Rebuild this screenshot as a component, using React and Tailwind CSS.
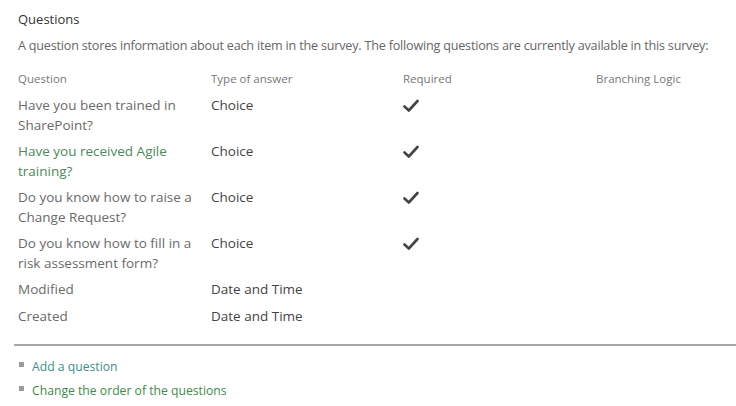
const rows = [
  { q: ['Have you been trained in', 'SharePoint?'], type: 'Choice', req: true },
  { q: ['Have you received Agile', 'training?'], type: 'Choice', req: true, link: true },
  { q: ['Do you know how to raise a', 'Change Request?'], type: 'Choice', req: true },
  { q: ['Do you know how to fill in a', 'risk assessment form?'], type: 'Choice', req: true },
  { q: ['Modified'], type: 'Date and Time' },
  { q: ['Created'], type: 'Date and Time' },
]

function Check() {
  return (
    <svg width="16" height="14" viewBox="0 0 16 14" className="mt-[4px]">
      <path d="M1.5 7.5 L5.8 11.5 L14.5 2" fill="none" stroke="#444" strokeWidth="2.6" strokeLinecap="round" strokeLinejoin="round" />
    </svg>
  )
}

export default function App() {
  return (
    <div className="w-[736px] h-[406px] bg-white overflow-hidden" style={{ fontFamily: '"Open Sans", "Noto Sans", sans-serif' }}>
      <div className="pl-[18px] pt-[10px]">
        <h2 className="text-[13px] leading-[18px] text-[#333]">Questions</h2>
        <p className="mt-[9px] text-[12.6px] leading-[18px] text-[#666] whitespace-nowrap tracking-[-0.2px]">
          A question stores information about each item in the survey. The following questions are currently available in this survey:
        </p>

        <div className="mt-[16px] grid grid-cols-[193px_192px_193px_1fr] text-[11.5px] leading-[16px] text-[#777]">
          <div>Question</div>
          <div>Type of answer</div>
          <div>Required</div>
          <div>Branching Logic</div>
        </div>

        <div className="mt-[8px]">
          {rows.map((r, i) => (
            <div key={i} className={`grid grid-cols-[193px_192px_193px_1fr] text-[13.5px] leading-[20px] ${r.q.length > 1 ? 'h-[46px]' : 'h-[27px]'}`}>
              <div className={r.link ? 'text-[#4b8a58]' : 'text-[#6a6a6a]'}>
                {r.q.map((l, j) => (
                  <div key={j} className="whitespace-nowrap">{l}</div>
                ))}
              </div>
              <div className="text-[#444]">{r.type}</div>
              <div>{r.req && <Check />}</div>
              <div></div>
            </div>
          ))}
        </div>
      </div>

      <div className="mt-[11px] ml-[14px] border-t-2 border-[#a6a6a6]"></div>

      <ul className="pl-[19px] pt-[9px] text-[12.2px] leading-[24px]">
        <li className="flex items-center gap-[8px]">
          <span className="w-[5px] h-[5px] bg-[#9a9a9a] -mt-[5px]"></span>
          <span className="text-[#3a8f88]">Add a question</span>
        </li>
        <li className="flex items-center gap-[8px]">
          <span className="w-[5px] h-[5px] bg-[#9a9a9a] -mt-[5px]"></span>
          <span className="text-[#3f8a48]">Change the order of the questions</span>
        </li>
      </ul>
    </div>
  )
}
